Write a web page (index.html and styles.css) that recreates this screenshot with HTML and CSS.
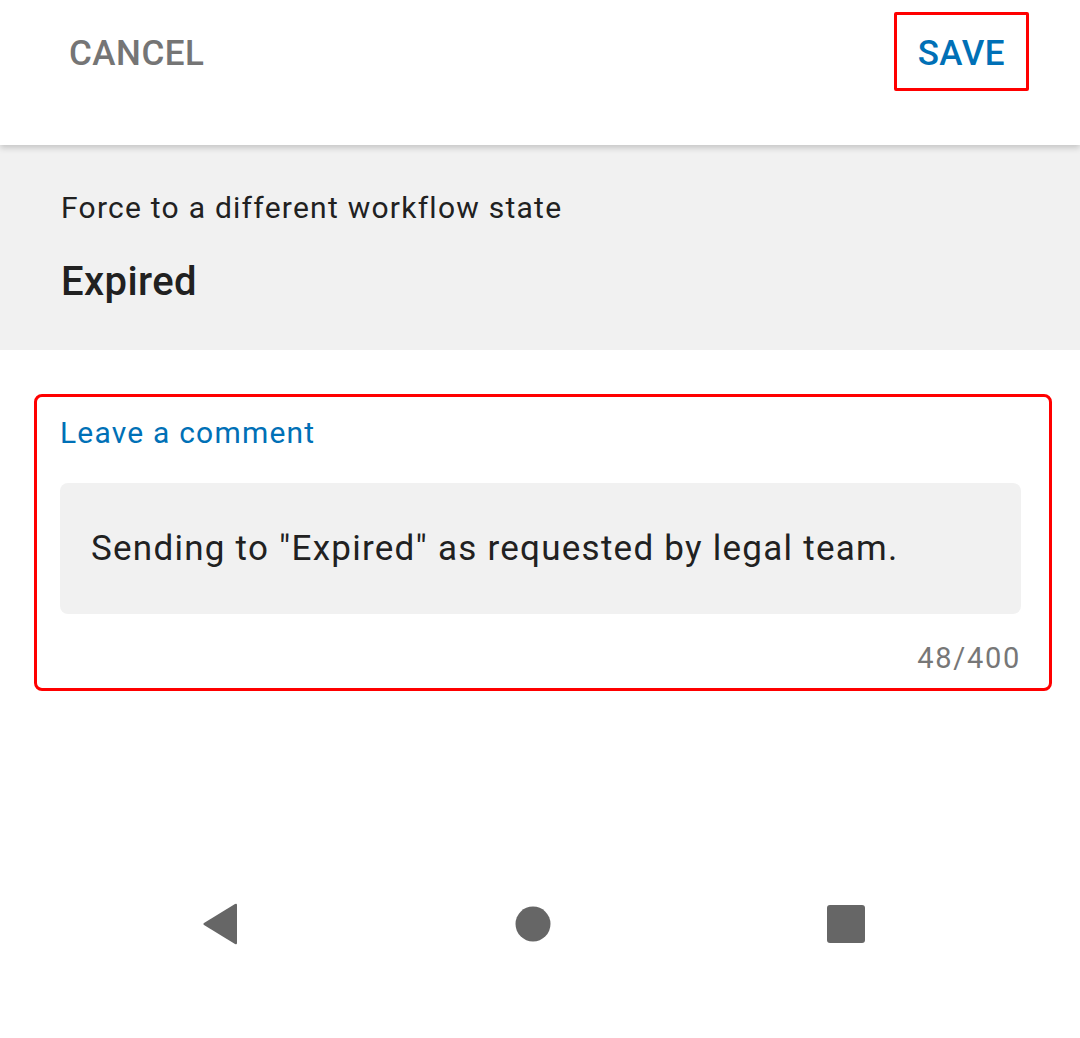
FILE: index.html
```html
<!DOCTYPE html>
<html lang="en">
<head>
    <meta charset="UTF-8">
    <meta name="viewport" content="width=device-width, initial-scale=1.0">
    <title>Workflow State</title>
    <link rel="stylesheet" href="styles.css">
</head>
<body>
    <div class="topbar">
        <button class="btn-cancel">CANCEL</button>
        <button class="btn-save">SAVE</button>
    </div>

    <div class="state-panel">
        <p class="state-label">Force to a different workflow state</p>
        <h2 class="state-value">Expired</h2>
    </div>

    <div class="comment-box">
        <label class="comment-label">Leave a comment</label>
        <div class="comment-field">Sending to "Expired" as requested by legal team.</div>
        <div class="comment-count">48/400</div>
    </div>

    <div class="navbar">
        <svg class="nav-icon" width="36" height="42" viewBox="0 0 36 42">
            <path d="M35 2 L35 40 Q35 42 33 41 L2 22 Q0.5 21 2 20 L33 1 Q35 0 35 2 Z" fill="#666"/>
        </svg>
        <svg class="nav-icon" width="36" height="36" viewBox="0 0 36 36">
            <circle cx="18" cy="18" r="17.5" fill="#666"/>
        </svg>
        <svg class="nav-icon" width="38" height="38" viewBox="0 0 38 38">
            <rect x="0" y="0" width="38" height="38" rx="3" fill="#666"/>
        </svg>
    </div>
</body>
</html>
```

FILE: styles.css
```css
body {
    margin: 0;
    font-family: Roboto, "Noto Sans", Arial, sans-serif;
    background: #fff;
    color: #212121;
}

/* top action bar */
.topbar {
    height: 145px;
    display: flex;
    justify-content: space-between;
    align-items: flex-start;
    padding: 12px 51px 0 45px;
    box-sizing: border-box;
    box-shadow: 0 3px 6px rgba(0,0,0,0.18);
    position: relative;
    z-index: 1;
    background: #fff;
}

.topbar button {
    background: none;
    border: 3px solid transparent;
    font-family: inherit;
    font-size: 35px;
    font-weight: 500;
    height: 79px;
    padding: 3px 21px 0;
    letter-spacing: 0.5px;
    cursor: pointer;
}

.btn-cancel {
    color: #757575;
}

.btn-save {
    color: #0070b6;
    border-color: #ff0000 !important;
    border-radius: 2px;
}

/* current state panel */
.state-panel {
    background: #f1f1f1;
    height: 205px;
    padding: 44px 61px 0;
    box-sizing: border-box;
}

.state-label {
    margin: 0;
    font-size: 30px;
    letter-spacing: 1.25px;
    line-height: 38px;
}

.state-value {
    margin: 31px 0 0;
    font-size: 40px;
    font-weight: 500;
    line-height: 48px;
    letter-spacing: 0.4px;
}

/* comment area */
.comment-box {
    margin: 44px 28px 0 34px;
    border: 3px solid #ff0000;
    border-radius: 8px;
    padding: 16px 28px 13px 23px;
    display: flex;
    flex-direction: column;
}

.comment-label {
    color: #0070b6;
    font-size: 30px;
    letter-spacing: 1.2px;
    line-height: 40px;
}

.comment-field {
    margin-top: 30px;
    background: #f1f1f1;
    border-radius: 8px;
    height: 131px;
    padding: 0 31px;
    display: flex;
    align-items: center;
    font-size: 35px;
    letter-spacing: 1.25px;
}

.comment-count {
    align-self: flex-end;
    margin-top: 27px;
    font-size: 29px;
    color: #777;
    letter-spacing: 1.7px;
}

/* android nav bar */
.navbar {
    display: flex;
    justify-content: space-between;
    align-items: center;
    padding: 0 215px 0 202px;
    margin-top: 212px;
}
```
